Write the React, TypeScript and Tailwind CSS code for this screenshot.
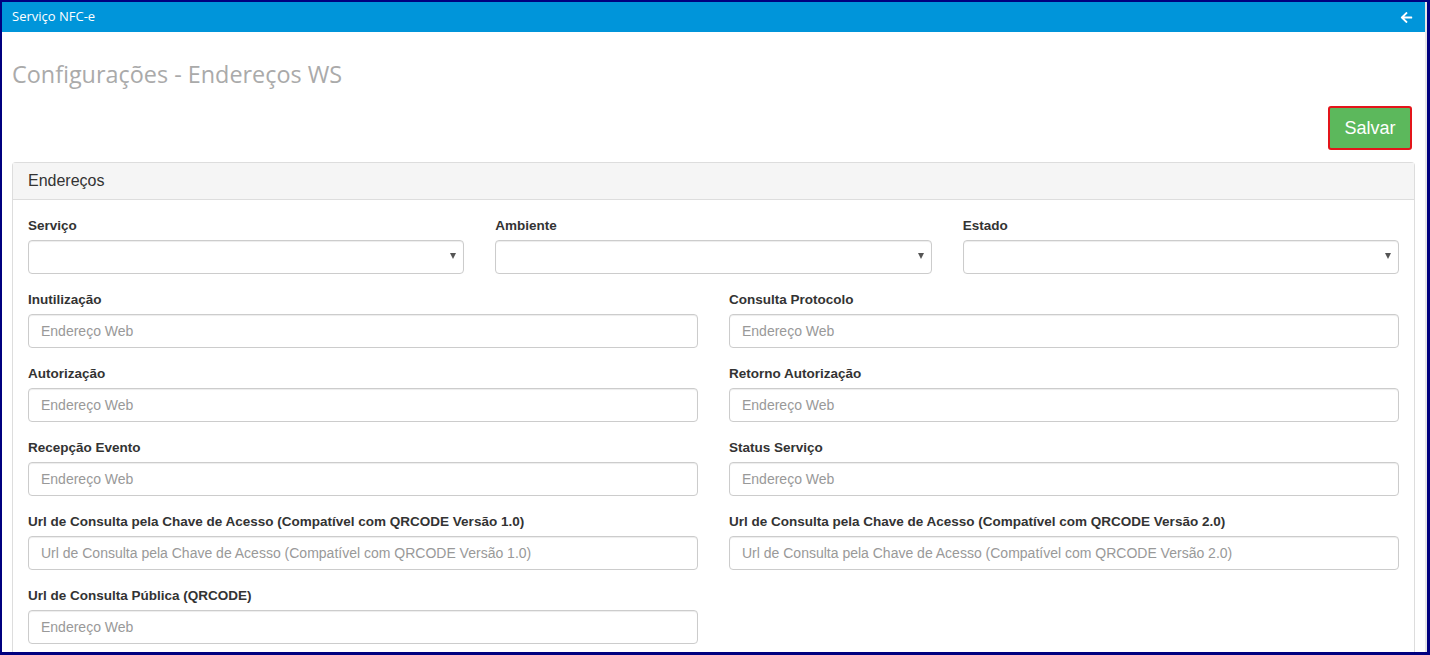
import React from "react";
import { FaArrowLeft } from "react-icons/fa";

const field = "h-[34px] w-full rounded-[4px] border border-[#cccccc] bg-white px-[12px] text-[14px] text-[#555] placeholder:text-[#999] shadow-[inset_0_1px_1px_rgba(0,0,0,0.075)] outline-none";
const label = "mb-[5px] block h-[20px] pt-[1px] text-[13.5px] font-bold leading-[20px] text-[#333]";

function SelectField({ title }: { title: string }) {
  return (
    <div className="mb-[15px]">
      <label className={label}>{title}</label>
      <div className="relative">
        <select className={field + " appearance-none"} defaultValue="">
          <option value=""></option>
        </select>
        <span className="pointer-events-none absolute right-[8px] top-[13px] h-0 w-0 border-x-[3px] border-t-[6px] border-x-transparent border-t-[#555]" />
      </div>
    </div>
  );
}

function TextField({ title, hint = "Endereço Web" }: { title: string; hint?: string }) {
  return (
    <div className="mb-[15px]">
      <label className={label}>{title}</label>
      <input className={field} placeholder={hint} />
    </div>
  );
}

const urlV1 = "Url de Consulta pela Chave de Acesso (Compatível com QRCODE Versão 1.0)";
const urlV2 = "Url de Consulta pela Chave de Acesso (Compatível com QRCODE Versão 2.0)";

export default function App() {
  return (
    <div className="flex h-[655px] w-[1430px] overflow-hidden border-b-[3px] border-l-2 border-r-[3px] border-t-2 border-[#00007f] bg-white font-['Liberation_Sans',Arial,sans-serif]">
      <div className="flex min-w-0 flex-1 flex-col">
        <div className="flex h-[30px] shrink-0 items-center justify-between bg-[#0095da] pl-[10px] pr-[12px]">
          <span className="font-['Open_Sans',sans-serif] text-[13px] text-white">Serviço NFC-e</span>
          <FaArrowLeft className="text-[13px] text-white" />
        </div>

        <h1 className="mt-[29px] pl-[10px] font-['Open_Sans',sans-serif] text-[23.4px] leading-[26px] text-[#aaaaaa]">
          Configurações - Endereços WS
        </h1>

        <div className="mt-[19px] flex justify-end pr-[13px]">
          <button className="h-[44px] w-[84px] rounded-[3px] border-2 border-[#e3151a] bg-[#5cb85c] text-[18px] text-white">
            Salvar
          </button>
        </div>

        <div className="ml-[10px] mr-[10px] mt-[12px] flex-1 rounded-t-[4px] border border-b-0 border-[#dddddd]">
          <div className="flex h-[37px] items-center border-b border-[#dddddd] bg-[#f5f5f5] px-[15px] text-[16px] text-[#333]">
            Endereços
          </div>
          <div className="px-[15px] pt-[15px]">
            <div className="grid grid-cols-3 gap-x-[31px]">
              <SelectField title="Serviço" />
              <SelectField title="Ambiente" />
              <SelectField title="Estado" />
            </div>
            <div className="grid grid-cols-2 gap-x-[31px]">
              <TextField title="Inutilização" />
              <TextField title="Consulta Protocolo" />
              <TextField title="Autorização" />
              <TextField title="Retorno Autorização" />
              <TextField title="Recepção Evento" />
              <TextField title="Status Serviço" />
              <TextField title={urlV1} hint={urlV1} />
              <TextField title={urlV2} hint={urlV2} />
              <TextField title="Url de Consulta Pública (QRCODE)" />
            </div>
          </div>
        </div>
      </div>
      <div className="w-[2px] shrink-0 bg-[#e6e6e6]" />
    </div>
  );
}
